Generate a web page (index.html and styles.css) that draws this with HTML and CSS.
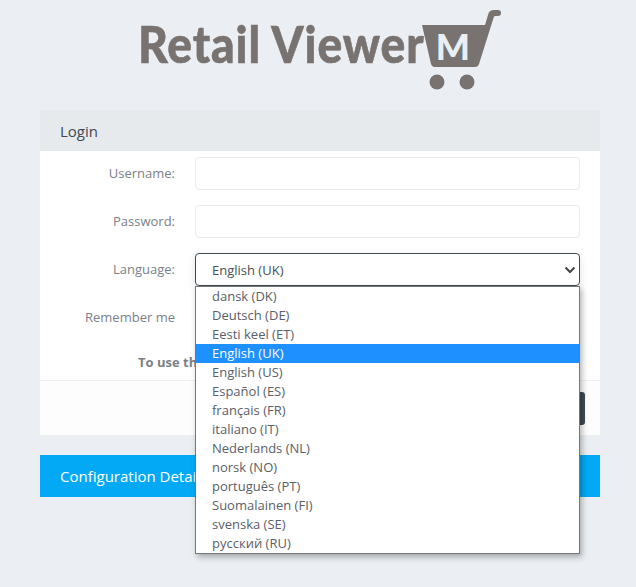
FILE: index.html
```html
<!DOCTYPE html>
<html lang="en">
  <head>
    <meta charset="UTF-8" />
    <meta name="viewport" content="width=device-width, initial-scale=1.0" />
    <title>Retail Viewer - Login</title>
    <link rel="stylesheet" href="styles.css">
  </head>
  <body>
    <div class="logo">
      <span class="logo-text">Retail Viewer</span>
      <span class="logo-cart">
        <svg width="82" height="82" viewBox="0 0 82 82">
          <path d="M2 16 H65 L68 6 Q69 1 74 1 H78 Q81 1 81 4 Q81 7 78 7 H75 Q74 7 73.5 9 L59 55 Q58 58 55 58 H14 Q12 58 11 55 Z" fill="#787371" />
          <circle cx="17" cy="73" r="7.5" fill="#787371" />
          <circle cx="47" cy="73" r="7.5" fill="#787371" />
        </svg>
        <span class="logo-m">M</span>
      </span>
    </div>

    <div class="card">
      <div class="card-header">Login</div>
      <div class="card-body">
        <div class="row">
          <label>Username:</label>
          <div class="field"><input type="text" /></div>
        </div>
        <div class="row">
          <label>Password:</label>
          <div class="field"><input type="password" /></div>
        </div>
        <div class="row">
          <label>Language:</label>
          <div class="field">
            <div class="select">
              <span>English (UK)</span>
              <svg width="12" height="8" viewBox="0 0 12 8">
                <path d="M1.5 1.5 L6 6 L10.5 1.5" fill="none" stroke="#444" stroke-width="2" />
              </svg>
            </div>
            <ul class="options">
              <li>dansk (DK)</li>
              <li>Deutsch (DE)</li>
              <li>Eesti keel (ET)</li>
              <li class="selected">English (UK)</li>
              <li>English (US)</li>
              <li>Español (ES)</li>
              <li>français (FR)</li>
              <li>italiano (IT)</li>
              <li>Nederlands (NL)</li>
              <li>norsk (NO)</li>
              <li>português (PT)</li>
              <li>Suomalainen (FI)</li>
              <li>svenska (SE)</li>
              <li>русский (RU)</li>
            </ul>
          </div>
        </div>
        <div class="row">
          <label>Remember me</label>
          <div class="field"><input class="check" type="checkbox" /></div>
        </div>
        <p class="notice">To use the application you must enable browser cookies</p>
      </div>
      <div class="card-footer">
        <button>Login</button>
      </div>
    </div>

    <div class="config">Configuration Details</div>
  </body>
</html>
```

FILE: styles.css
```css
body {
  font-family: "Open Sans", sans-serif;
  background-color: #ebeff3;
  margin: 0;
  padding: 0 36px 0 40px;
  min-height: 587px;
  box-sizing: border-box;
  color: #495057;
}

.logo {
  display: flex;
  justify-content: center;
  align-items: flex-start;
  height: 110px;
}

.logo-text {
  font-family: "Lato", sans-serif;
  font-weight: 900;
  font-size: 51px;
  letter-spacing: 1px;
  line-height: 50px;
  margin-top: 19px;
  margin-right: -30px;
  color: #787371;
  white-space: nowrap;
  transform: scaleX(0.905);
  transform-origin: left center;
  -webkit-text-stroke: 0.6px #787371;
}

.logo-cart {
  position: relative;
  margin-left: -5px;
  margin-top: 9px;
  height: 82px;
}

.logo-m {
  position: absolute;
  left: 16px;
  top: 17px;
  font-family: "Lato", sans-serif;
  font-weight: 900;
  font-size: 36px;
  line-height: 40px;
  color: #ebeff3;
}

.card {
  width: 560px;
  background-color: white;
  border-radius: 2px;
}

.card-header {
  background-color: #e6eaed;
  height: 41px;
  line-height: 43px;
  padding-left: 20px;
  font-size: 15px;
  color: #3f4a54;
}

.card-body {
  padding: 6px 20px 0;
  height: 230px;
  box-sizing: border-box;
  border-bottom: 1px solid #f1f1f1;
}

.row {
  display: flex;
  align-items: center;
  height: 33px;
  margin-bottom: 15px;
}

.row label {
  width: 115px;
  text-align: right;
  font-size: 13px;
  line-height: 32px;
  margin-bottom: 1px;
  color: #7b7f88;
  flex-shrink: 0;
}

.field {
  position: relative;
  margin-left: 20px;
  flex: 1;
}

.field input {
  display: block;
  width: 100%;
  height: 33px;
  box-sizing: border-box;
  border: 1px solid #e8eaed;
  border-radius: 4px;
  background-color: white;
}

.field .check {
  width: 16px;
  height: 16px;
}

.select {
  display: flex;
  justify-content: space-between;
  align-items: center;
  height: 33px;
  box-sizing: border-box;
  border: 1px solid #3f4a54;
  border-radius: 4px;
  padding: 0 3px 0 16px;
  font-size: 13px;
  color: #495057;
  box-shadow: 0 3px 8px rgba(0, 0, 0, 0.12);
}

.options {
  position: absolute;
  top: 33px;
  left: 0;
  right: 0;
  margin: 0;
  padding: 0;
  list-style: none;
  background-color: white;
  border: 1px solid #767676;
  box-shadow: 2px 3px 6px rgba(0, 0, 0, 0.3);
  font-size: 13px;
  color: #5a6068;
  z-index: 10;
}

.options li {
  height: 19px;
  line-height: 19px;
  padding-left: 16px;
}

.options .selected {
  background-color: #1e90ff;
  color: white;
}

.notice {
  margin: 0;
  padding-top: 4px;
  text-align: center;
  font-size: 13px;
  font-weight: bold;
  color: #7b7f88;
}

.card-footer {
  height: 54px;
  background-color: #fdfdfd;
  display: flex;
  justify-content: flex-end;
  align-items: center;
  padding-right: 15px;
  border-radius: 0 0 2px 2px;
}

.card-footer button {
  height: 33px;
  padding: 0 20px;
  background-color: #3f4a54;
  color: white;
  border: none;
  border-radius: 3px;
  font-family: inherit;
  font-size: 13px;
}

.config {
  width: 560px;
  box-sizing: border-box;
  margin-top: 20px;
  height: 42px;
  line-height: 43px;
  padding-left: 20px;
  background-color: #03a9f4;
  color: white;
  font-size: 15px;
}
```
